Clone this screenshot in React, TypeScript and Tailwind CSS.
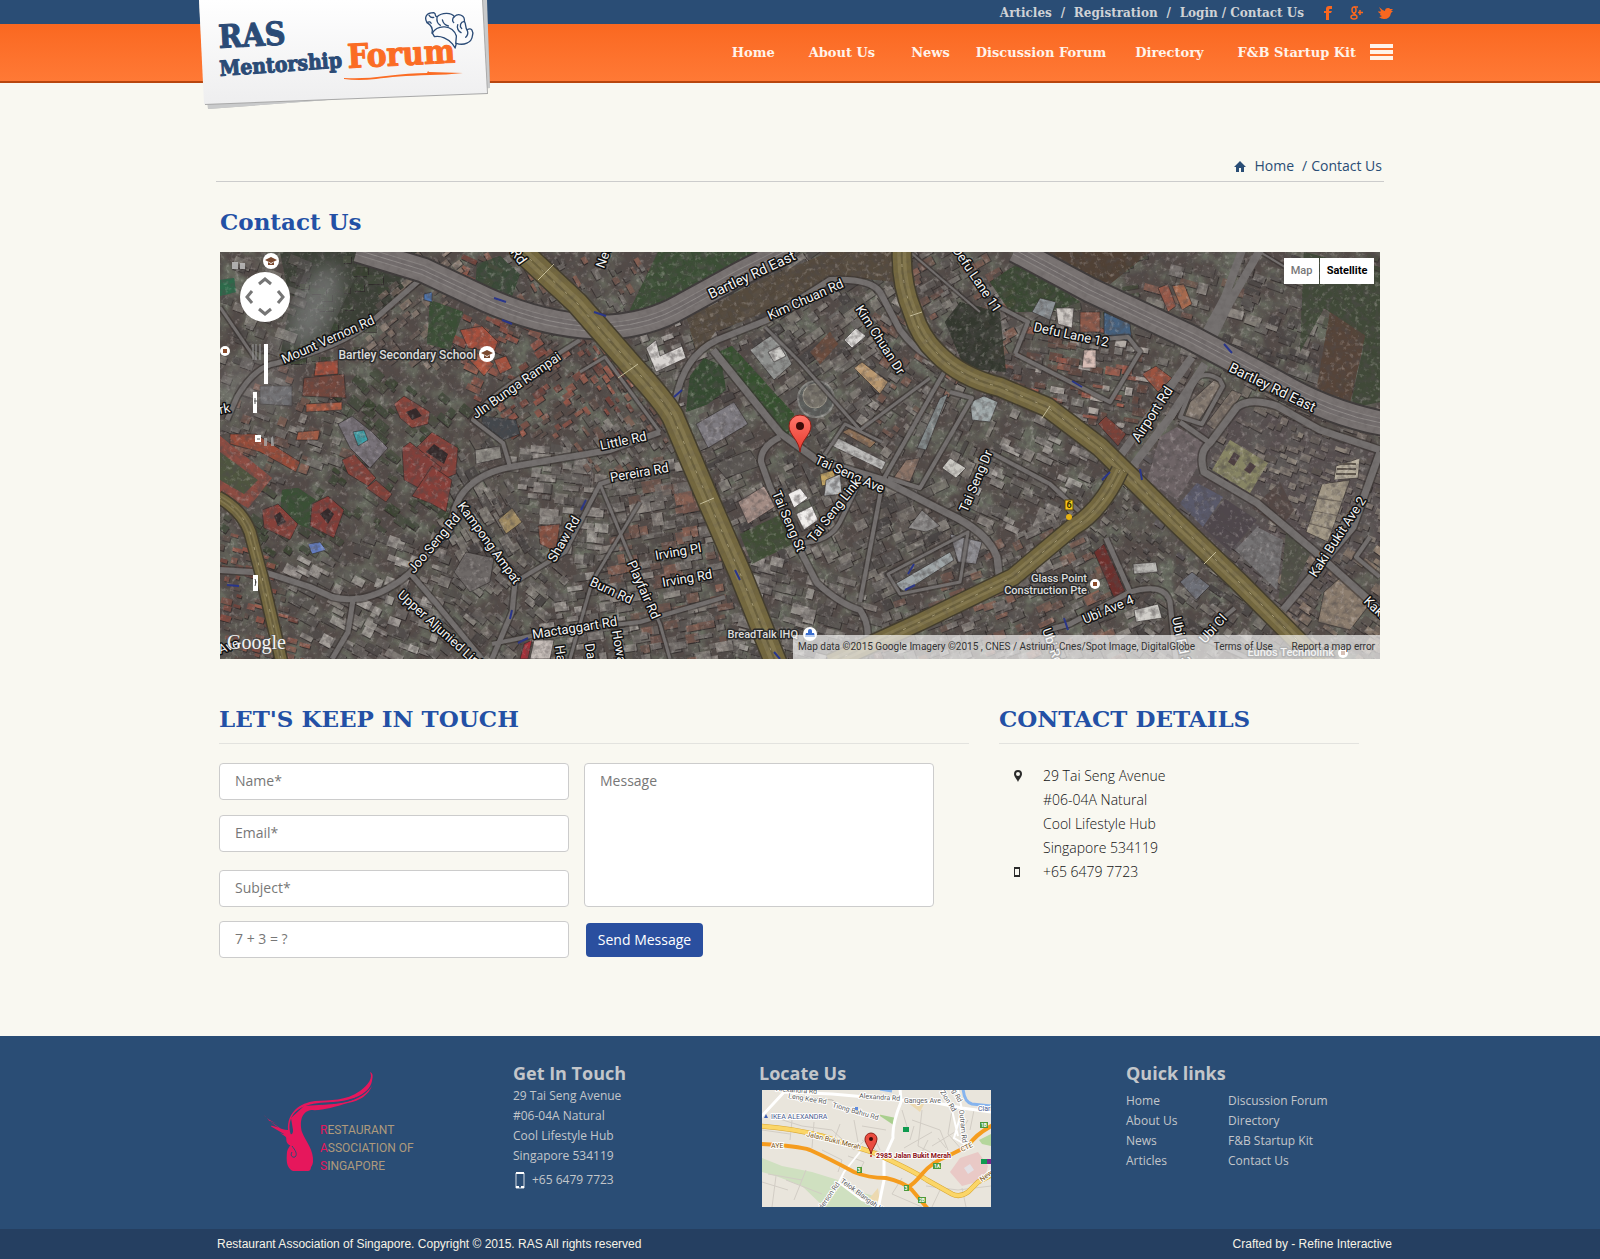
import React from "react";

const slab = "font-['DejaVu_Serif',serif] font-bold";

/* ---------- seeded random numbers for the aerial texture ---------- */
function makeRandom(seed: number) {
  let s = seed;
  return () => {
    s = (s * 1664525 + 1013904223) % 4294967296;
    return s / 4294967296;
  };
}

type Zone = { x: number; y: number; angle: number; size: number; density: number; colors: string[] };

const grey = ["#6f6b68", "#5a5654", "#858079", "#4b4746", "#8a857f", "#454141", "#635b57"];
const red = ["#8a4a3f", "#9a5547", "#74423a", "#635049", "#a3604f", "#5a4b46"];
const mixed = ["#78736f", "#8c6254", "#5d5855", "#9d9791", "#4f4946", "#74564c", "#7f7a76"];
const bright = ["#8a8581", "#b5b0ab", "#6b6663", "#5c5855", "#9b9590", "#504b49"];
const trees = ["#3c4635", "#414a3a", "#38432f", "#4a5040"];

const zones: Zone[] = [
  { x: 40, y: 30, angle: 20, size: 15, density: 0.35, colors: grey },
  { x: 110, y: 50, angle: 0, size: 12, density: 0.3, colors: trees },
  { x: 190, y: 80, angle: -38, size: 9, density: 0.8, colors: ["#8d7a6e", "#75645c", "#645752", "#9a897e"] },
  { x: 180, y: 150, angle: 40, size: 12, density: 0.4, colors: trees },
  { x: 265, y: 90, angle: 25, size: 12, density: 0.5, colors: red },
  { x: 330, y: 130, angle: -35, size: 9, density: 0.85, colors: red },
  { x: 350, y: 20, angle: 60, size: 9, density: 0.7, colors: mixed },
  { x: 390, y: 130, angle: 55, size: 9, density: 0.85, colors: red },
  { x: 400, y: 180, angle: 55, size: 9, density: 0.85, colors: mixed },
  { x: 60, y: 180, angle: 20, size: 12, density: 0.6, colors: mixed },
  { x: 110, y: 330, angle: 28, size: 14, density: 0.6, colors: bright },
  { x: 20, y: 360, angle: 15, size: 8, density: 0.9, colors: red },
  { x: 90, y: 260, angle: 35, size: 12, density: 0.45, colors: trees },
  { x: 180, y: 250, angle: 35, size: 12, density: 0.4, colors: trees },
  { x: 180, y: 300, angle: 20, size: 14, density: 0.6, colors: bright },
  { x: 265, y: 260, angle: 60, size: 14, density: 0.75, colors: grey },
  { x: 290, y: 340, angle: 40, size: 12, density: 0.75, colors: grey },
  { x: 330, y: 240, angle: 5, size: 14, density: 0.75, colors: bright },
  { x: 430, y: 240, angle: -10, size: 16, density: 0.75, colors: mixed },
  { x: 440, y: 330, angle: -10, size: 13, density: 0.8, colors: mixed },
  { x: 350, y: 380, angle: -8, size: 12, density: 0.8, colors: bright },
  { x: 440, y: 110, angle: -20, size: 10, density: 0.5, colors: bright },
  { x: 520, y: 200, angle: -25, size: 14, density: 0.45, colors: grey },
  { x: 610, y: 110, angle: -35, size: 14, density: 0.65, colors: grey },
  { x: 680, y: 120, angle: 35, size: 11, density: 0.75, colors: mixed },
  { x: 600, y: 250, angle: 65, size: 14, density: 0.5, colors: grey },
  { x: 660, y: 290, angle: -25, size: 16, density: 0.6, colors: grey },
  { x: 590, y: 360, angle: 15, size: 14, density: 0.65, colors: bright },
  { x: 740, y: 170, angle: -65, size: 13, density: 0.35, colors: grey },
  { x: 760, y: 30, angle: -30, size: 12, density: 0.8, colors: mixed },
  { x: 800, y: 200, angle: 25, size: 15, density: 0.6, colors: bright },
  { x: 850, y: 100, angle: 10, size: 11, density: 0.85, colors: ["#a65c4c", "#8b8783", "#bdb6b0", "#6b4940", "#5a5452"] },
  { x: 870, y: 20, angle: -10, size: 12, density: 0.4, colors: trees },
  { x: 960, y: 40, angle: 15, size: 14, density: 0.35, colors: mixed },
  { x: 1060, y: 80, angle: 20, size: 14, density: 0.5, colors: grey },
  { x: 1130, y: 70, angle: 20, size: 14, density: 0.2, colors: trees },
  { x: 1000, y: 140, angle: 28, size: 12, density: 0.35, colors: ["#6d645f", "#5d5654", "#7b716a"] },
  { x: 1100, y: 210, angle: 20, size: 9, density: 0.8, colors: ["#857b73", "#6e6660", "#958c81", "#5e5651"] },
  { x: 960, y: 260, angle: 35, size: 12, density: 0.12, colors: ["#575156", "#5f5a5e"] },
  { x: 850, y: 330, angle: -25, size: 13, density: 0.7, colors: mixed },
  { x: 910, y: 290, angle: 40, size: 7, density: 0.8, colors: grey },
  { x: 980, y: 350, angle: 35, size: 13, density: 0.6, colors: grey },
  { x: 1120, y: 370, angle: 35, size: 12, density: 0.7, colors: ["#8c7a6c", "#6c615a", "#9c8a79", "#5d5450"] },
  { x: 720, y: 390, angle: -20, size: 12, density: 0.7, colors: mixed },
];

const buildings = (() => {
  const rnd = makeRandom(20153);
  const out: { x: number; y: number; w: number; h: number; a: number; c: string; o: number }[] = [];
  for (let y = 3; y < 407; y += 10) {
    for (let x = 3; x < 1160; x += 11) {
      const px = x + rnd() * 6 - 3;
      const py = y + rnd() * 6 - 3;
      let zone = zones[0];
      let best = 1e9;
      for (const z of zones) {
        const d = (z.x - px) ** 2 + (z.y - py) ** 2;
        if (d < best) {
          best = d;
          zone = z;
        }
      }
      const k = rnd();
      const w = Math.round(zone.size * (0.5 + rnd() * 0.9));
      const h = Math.round(zone.size * (0.3 + rnd() * 0.5));
      const c = zone.colors[Math.floor(rnd() * zone.colors.length)];
      const o = 0.55 + rnd() * 0.35;
      if (k < zone.density) out.push({ x: Math.round(px), y: Math.round(py), w, h, a: zone.angle, c, o });
    }
  }
  return out;
})();

const fields: [string, string][] = [
  ["60,0 200,0 200,20 150,70 110,95 60,105 70,50", "#3b4036"],
  ["257,12 280,4 300,22 292,44 270,40 256,28", "#3a4a38"],
  ["210,48 243,60 230,98 207,92", "#3a4f35"],
  ["407,64 438,0 545,0 500,26 450,52", "#3b4e35"],
  ["467,66 545,26 610,0 678,0 678,30 615,24 545,60 495,80 478,106", "#554a3e"],
  ["498,100 512,94 574,162 568,184", "#36512f"],
  ["470,124 484,106 502,114 506,138 488,152 466,160", "#354a31"],
  ["520,282 562,262 572,292 532,312", "#404f36"],
  ["62,238 78,236 102,252 92,278 60,264", "#3a5035"],
  ["0,184 52,226 28,256 0,240", "#8c4c42"],
  ["0,200 38,228 24,242 0,228", "#47563f"],
  ["0,28 14,26 16,40 0,44", "#2d6a4a"],
  ["1110,60 1146,80 1130,150 1096,140", "#574439"],
  ["1084,0 1160,20 1160,150 1130,156 1146,84 1104,56 1080,100", "#404938"],
  ["830,0 930,0 880,40 840,20", "#504136"],
  ["770,30 800,10 860,50 830,60 790,60", "#394832"],
  ["725,70 740,50 780,60 786,120 745,116", "#33382f"],
  ["590,100 610,80 618,92 600,112", "#6a4b3e"],
  ["940,185 957,175 990,195 957,248 927,228", "#716769"],
  ["960,251 977,231 1003,245 983,275", "#5a5b6d"],
  ["983,275 1005,247 1037,268 1010,300", "#4e474b"],
  ["1010,188 1048,211 1030,241 992,218", "#8b8965"],
  ["1015,298 1037,275 1063,288 1057,338", "#787576"],
  ["1064,300 1066,280 1092,298 1072,340 1058,350", "#4f5145"],
  ["1032,256 1060,230 1074,258 1060,276", "#534743"],
];

const blocks: [string, string][] = [
  ["174,152 184,144 210,160 208,172 192,176 180,166", "#8b453c"],
  ["196,196 212,180 238,196 236,222 226,226", "#86423b"],
  ["182,196 190,190 222,216 206,240 184,228", "#833f3a"],
  ["212,214 232,228 226,260 212,252 192,244", "#883f39"],
  ["122,208 134,202 156,226 148,234 128,222", "#84423a"],
  ["146,236 156,228 172,242 166,250", "#83423a"],
  ["42,258 58,252 78,272 70,288 44,276", "#86413a"],
  ["92,252 108,244 124,258 114,286 90,274", "#833d38"],
  ["96,110 118,108 118,122 94,124", "#a24f3d"],
  ["84,126 124,122 126,146 82,144", "#74473d"],
  ["86,152 122,150 122,158 86,160", "#aa5b43"],
  ["78,180 100,178 98,188 76,188", "#a05c46"],
  ["10,182 36,182 80,210 76,220 40,200 10,192", "#974c3a"],
  ["240,78 262,74 278,90 274,100 248,96", "#a64f3d"],
  ["246,104 256,100 274,112 264,124", "#b0553f"],
  ["274,108 286,104 292,116 280,122", "#a4523f"],
  ["40,134 72,134 72,154 40,152", "#6b6c70"],
  ["118,172 132,164 152,180 168,196 150,216 130,196", "#79737a"],
  ["133,180 144,178 148,188 138,194", "#3ca3ac"],
  ["262,164 296,168 300,182 278,190 262,176", "#43474c"],
  ["255,198 280,194 282,206 256,212", "#8a8781"],
  ["278,268 292,256 302,270 286,282", "#a18c63"],
  ["318,274 340,272 336,300 320,292", "#865243"],
  ["234,320 246,300 274,306 270,330 250,340", "#6e6967"],
  ["476,172 514,150 528,172 488,196", "#7f7c82"],
  ["494,212 530,198 540,214 506,226", "#5c5854"],
  ["518,250 544,234 556,254 528,272", "#a38c84"],
  ["530,98 556,80 572,112 554,128", "#8e908e"],
  ["548,100 560,94 566,104 554,110", "#d0cfcb"],
  ["426,96 436,88 440,104 462,94 466,106 436,120", "#d8d4d1"],
  ["568,242 580,236 588,246 574,256", "#efecea"],
  ["576,262 592,254 598,268 584,278", "#f1eeec"],
  ["600,222 614,218 616,230 602,234", "#c4a664"],
  ["606,228 620,222 622,242 604,244", "#b9bcbe"],
  ["608,192 618,186 666,210 662,218", "#b9b8b6"],
  ["622,180 630,176 656,190 650,196", "#8e7158"],
  ["624,88 636,76 646,84 632,96", "#dcdad7"],
  ["634,116 642,110 668,130 660,142", "#b8976f"],
  ["720,146 728,142 706,198 697,196", "#838b8c"],
  ["672,228 686,208 700,206 690,230", "#8c7467"],
  ["750,150 764,144 778,150 770,170 752,168", "#a0a9aa"],
  ["722,216 730,206 746,216 736,226", "#c9c7c1"],
  ["675,332 730,300 734,308 684,340", "#9fa6a8"],
  ["730,282 762,290 756,312 738,310", "#8d8c91"],
  ["688,276 702,258 720,274 706,280", "#8b8988"],
  ["812,60 820,46 836,50 830,68", "#8c9296"],
  ["836,56 854,56 852,76 838,72", "#cfcac5"],
  ["860,60 880,60 880,80 860,80", "#8e5a4a"],
  ["884,60 910,72 912,90 884,82", "#45617f"],
  ["864,98 876,98 876,116 862,116", "#d6bcb4"],
  ["922,122 936,114 952,126 938,140", "#9c5340"],
  ["878,172 886,164 906,182 898,194", "#7d4138"],
  ["938,36 948,32 956,54 948,60", "#955848"],
  ["952,34 964,32 972,52 962,58", "#a66a4e"],
  ["874,300 884,292 908,346 896,350", "#6d2f2c"],
  ["913,312 936,310 938,320 914,322", "#b9b8b4"],
  ["914,358 938,352 942,366 916,370", "#cfcdc8"],
  ["970,150 994,128 1004,132 978,170 964,166", "#857a70"],
  ["986,172 1012,138 1022,142 998,180", "#7c7168"],
  ["1116,214 1140,206 1138,226 1114,228", "#b6ae9d"],
  ["1102,232 1130,228 1108,290 1086,280", "#a09684"],
  ["1104,340 1120,326 1150,352 1130,378 1098,370", "#8c7d6e"],
  ["960,330 972,320 990,334 976,348", "#6e7078"],
  ["88,292 100,290 106,298 92,302", "#6480c8"],
  ["204,42 212,40 212,50 204,48", "#4e76b0"],
  ["314,388 334,388 330,407 310,407", "#c6bdb8"],
  ["304,392 312,388 308,407 300,407", "#a4323a"],
];

const roads: [string, number][] = [
  ["M203 25L150 71Q120 95 57 111Q35 114 17 145L7 168", 6],
  ["M0 55L36 108", 4],
  ["M440 180L390 198L290 215Q255 222 240 245Q232 260 230 278L190 321Q150 355 112 345L90 335L47 321L0 318", 7],
  ["M360 88L300 126Q262 150 253 168L283 191L290 215", 5],
  ["M237 250L262 285L295 330L292 360L272 407", 6],
  ["M295 330L345 300L380 232L410 222", 5],
  ["M190 321L215 350L262 407", 6],
  ["M133 348L128 380L112 407", 6],
  ["M272 392L330 380L420 370L505 345", 5],
  ["M360 120L385 105L440 180", 4],
  ["M380 232L408 300L440 372L450 407", 4],
  ["M350 407L372 330L420 250", 4],
  ["M455 150Q460 125 470 111Q480 96 497 88L547 68L610 28Q650 26 660 40L680 78Q695 98 710 105", 7],
  ["M493 98L560 181L597 208L663 228L727 261Q768 280 777 305L780 330", 8],
  ["M560 185Q540 195 541 210L550 235L580 298L597 331Q620 352 640 358Q650 372 647 390", 7],
  ["M580 291Q610 290 620 270L637 235", 5],
  ["M605 202L625 172L662 190", 4],
  ["M640 178L710 126", 4],
  ["M727 115L663 228L640 350", 5],
  ["M730 140L752 146L700 236L668 226", 5],
  ["M640 178L580 110L545 75", 4],
  ["M668 322L748 280L740 330L680 342Z", 4],
  ["M795 102L808 70L770 50", 5],
  ["M795 102L890 150L920 100L908 85L870 88", 5],
  ["M690 0L760 60", 3],
  ["M770 200L830 232L860 260", 5],
  ["M960 165L975 128Q985 118 1000 128L1003 134L982 172Z", 5],
  ["M960 170L990 191", 6],
  ["M1160 198L1100 178L1057 154Q1030 145 1017 155L990 191Q978 200 984 220L1037 251L1093 298L1160 358", 8],
  ["M1160 200L1133 275L1063 358", 8],
  ["M886 286L910 340L850 372L820 380", 6],
  ["M910 340Q945 330 950 350L956 407", 6],
  ["M1015 356L980 385L1030 407", 5],
  ["M1150 285L1136 305L1160 325", 5],
  ["M1040 0L1090 30", 3],
];

const labels: [string, number, number, number, number?][] = [
  ["Mount Vernon Rd", 64, 112, -24],
  ["Jln Bunga Rampai", 256, 167, -35],
  ["Bartley Rd East", 491, 47, -25, 14],
  ["Kim Chuan Rd", 550, 68, -24],
  ["Kim Chuan Dr", 635, 57, 57],
  ["Defu Lane 11", 732, -2, 56],
  ["Defu Lane 12", 813, 79, 12],
  ["Bartley Rd East", 1008, 119, 26, 14],
  ["Airport Rd", 919, 191, -57, 14],
  ["Little Rd", 381, 198, -12],
  ["Pereira Rd", 391, 230, -10],
  ["Irving Pl", 436, 308, -10],
  ["Irving Rd", 443, 335, -10],
  ["Playfair Rd", 407, 311, 66],
  ["Burn Rd", 369, 333, 25],
  ["Shaw Rd", 335, 311, -60],
  ["Kampong Ampat", 237, 254, 54],
  ["Joo Seng Rd", 194, 322, -50],
  ["Upper Aljunied Link", 177, 344, 42],
  ["Mactaggart Rd", 313, 387, -9],
  ["Tai Seng Ave", 594, 211, 24],
  ["Tai Seng Link", 594, 291, -52],
  ["Tai Seng St", 552, 241, 67],
  ["Tai Seng Dr", 747, 261, -67],
  ["Ubi Ave 4", 865, 372, -23],
  ["Kaki Bukit Ave 2", 1096, 326, -57],
  ["Kaki Bukit", 1143, 350, 44],
  ["Ubi Cl", 985, 392, -48],
  ["Ubi Rd", 822, 378, 70],
  ["Ubi Rd 3", 952, 366, 78],
  ["Howard Rd", 392, 379, 80],
  ["Hang Rd", 335, 394, 82],
  ["Darul", 365, 392, 82],
  ["Rd", 290, 0, 55, 14],
  ["New", 384, 17, -70],
  ["rk", 0, 162, -10],
  ["Ave", 0, 402, -20],
];

function SatelliteMap() {
  const expressways = [
    "M137 -2L203 18L267 48Q330 76 390 75Q430 72 460 55L520 22L572 -4",
    "M795 -2L870 38L970 85L1057 131Q1110 162 1166 172",
  ];
  const yellow: [string, number][] = [
    ["M298 -4L357 51L413 115Q445 150 453 165L487 245L520 321L556 411", 21],
    ["M682 -4Q680 30 693 61Q700 85 717 101Q740 125 780 135L827 155L880 195L957 271L1020 331L1100 411", 18],
    ["M900 218Q880 260 853 275L793 325L700 370L610 411", 16],
    ["M-2 245Q22 258 30 280L42 325L62 411", 11],
  ];
  return (
    <svg
      className="block h-[407px] w-full"
      viewBox="0 0 1160 407"
      preserveAspectRatio="xMidYMid slice"
      role="img"
      aria-label="Satellite map around Tai Seng Avenue"
    >
      <defs>
        <filter id="patches" x="0" y="0" width="100%" height="100%">
          <feTurbulence type="fractalNoise" baseFrequency="0.045" numOctaves="3" seed="3" />
          <feColorMatrix values="0 0 0 0 0.17  0 0 0 0 0.2  0 0 0 0 0.15  3 0 0 0 -1.2" />
        </filter>
        <filter id="grain" x="0" y="0" width="100%" height="100%">
          <feTurbulence type="fractalNoise" baseFrequency="0.16" numOctaves="3" seed="7" />
          <feColorMatrix values="0 0 0 0 0.08  0 0 0 0 0.07  0 0 0 0 0.07  2.6 0 0 0 -1.1" />
        </filter>
        <filter id="specks" x="0" y="0" width="100%" height="100%">
          <feTurbulence type="fractalNoise" baseFrequency="0.2" numOctaves="3" seed="19" />
          <feColorMatrix values="0 0 0 0 0.86  0 0 0 0 0.8  0 0 0 0 0.78  0 3.4 0 0 -1.9" />
        </filter>
        <filter id="soft">
          <feGaussianBlur stdDeviation="10" />
        </filter>
        <linearGradient id="pin" x1="0" y1="0" x2="0" y2="1">
          <stop offset="0" stopColor="#ff776b" />
          <stop offset="1" stopColor="#e8382c" />
        </linearGradient>
      </defs>
      <rect width="1160" height="407" fill="#534a47" />
      <rect width="1160" height="407" filter="url(#patches)" opacity="0.7" />
      {fields.map(([p, c], i) => (
        <polygon key={i} points={p} fill={c} />
      ))}
      <polygon points="905,215 1010,150 1160,195 1160,290 1060,380 1000,320" fill="#5b5356" opacity="0.6" />
      <g>
        {buildings.map((b, i) => (
          <g key={i} transform={`translate(${b.x} ${b.y}) rotate(${b.a})`} opacity={b.o}>
            <rect x="1" y="1" width={b.w} height={b.h} fill="#2b2626" />
            <rect width={b.w} height={b.h} fill={b.c} />
          </g>
        ))}
      </g>
      {fields.slice(1).map(([p, c], i) => (
        <polygon key={i} points={p} fill={c} opacity="0.88" />
      ))}
      {blocks.map(([p, c], i) => (
        <polygon key={i} points={p} fill={c} stroke="#2a2424" strokeOpacity="0.6" />
      ))}
      <path d="M186 160L196 156L202 164L192 168ZM206 200L214 192L228 202L224 212ZM100 262L108 256L114 262L108 272ZM54 264L60 260L66 270L58 274Z" fill="#34292a" />
      <circle cx="596" cy="147" r="18" fill="#5d605d" stroke="#8a8a86" strokeWidth="2" />
      <circle cx="595" cy="144" r="12" fill="#77736a" stroke="#9b978b" />
      <path d="M1014 200L1020 204L1014 214L1008 210ZM1030 210L1036 214L1030 222L1024 218Z" fill="#4d3f41" />
      <path d="M1090 245L1124 250M1088 258L1120 264M1084 270L1114 278" stroke="#6d6459" />
      <path d="M1118 212L1136 212M1117 217L1136 217M1116 222L1136 222" stroke="#5d554b" strokeWidth="2" />
      <rect width="1160" height="407" filter="url(#grain)" opacity="0.42" />
      <rect width="1160" height="407" filter="url(#specks)" opacity="0.28" />
      <ellipse cx="95" cy="55" rx="20" ry="46" transform="rotate(25 95 55)" fill="#9a9a9c" opacity="0.55" filter="url(#soft)" />
      <ellipse cx="35" cy="135" rx="40" ry="26" fill="#8a8686" opacity="0.35" filter="url(#soft)" />
      <g fill="none" strokeLinejoin="round">
        {roads.map(([d, w], i) => (
          <path key={i} d={d} stroke="#35312f" strokeWidth={w + 2} opacity="0.6" />
        ))}
        {roads.map(([d, w], i) => (
          <path key={i} d={d} stroke="#74706f" strokeWidth={w - 1} />
        ))}
        <path d="M1040 -2L1010 50L990 91M1022 -2L1005 45L982 88M972 105L897 208M985 112L950 165L912 215" stroke="#757170" strokeWidth="8" />
        {expressways.map((d, i) => (
          <g key={i}>
            <path d={d} stroke="#3f3b3b" strokeWidth="27" />
            <path d={d} stroke="#797372" strokeWidth="23" />
            <path d={d} stroke="#8b8684" strokeWidth="10" />
            <path d={d} stroke="#736d6d" strokeWidth="8" />
            <path d={d} stroke="#928d8b" strokeWidth="1" />
          </g>
        ))}
        {yellow.map(([d, w], i) => (
          <g key={i}>
            <path d={d} stroke="#433d2d" strokeWidth={w + 3} />
            <path d={d} stroke="#74683f" strokeWidth={w} />
            <path d={d} stroke="#84784f" strokeWidth={w / 2} />
            <path d={d} stroke="#6b613d" strokeWidth="2" />
            <path d={d} stroke="#a89d78" strokeWidth="1" strokeDasharray="3 13" />
          </g>
        ))}
        <path d="M480 252L494 246M690 64L702 60M822 166L830 154M984 312L996 300M398 126L418 112M318 28L334 12" stroke="#c9c19d" strokeWidth="1" />
        <path
          d="M274 46L286 50M282 68L292 72M374 60L386 64M454 145L462 138M515 318L520 328M361 258L366 248M290 367L292 358M298 391L308 386M7 333L19 334M1004 92L1012 101M852 129L862 135M882 228L890 220M920 217L922 228M844 366L848 378M685 338L695 333M688 322L694 312M554 400L560 407"
          stroke="#28358c"
          strokeWidth="2"
        />
      </g>
      <rect width="1160" height="407" filter="url(#grain)" opacity="0.2" />
      <g
        fontFamily="Roboto, sans-serif"
        fill="#f4f4f4"
        stroke="#111111"
        strokeWidth="3"
        strokeLinejoin="round"
        paintOrder="stroke"
      >
        {labels.map(([t, x, y, a, s], i) => (
          <text key={i} transform={`translate(${x} ${y}) rotate(${a})`} fontSize={s ?? 13}>
            {t}
          </text>
        ))}
        <g fill="#dcdcdc" stroke="#2b2b2b" fontWeight="500">
          <text x="256" y="107" textAnchor="end" fontSize="12">Bartley Secondary School</text>
          <text x="867" y="330" textAnchor="end" fontSize="11">Glass Point</text>
          <text x="867" y="342" textAnchor="end" fontSize="11">Construction Pte</text>
          <text x="578" y="386" textAnchor="end" fontSize="11">BreadTalk IHQ</text>
          <text x="1114" y="404" textAnchor="end" fontSize="11">Eunos Technolink</text>
        </g>
      </g>
      {[[267, 102], [51, 9]].map(([x, y], i) => (
        <g key={i} transform={`translate(${x} ${y})`}>
          <circle r="8" fill="#ffffff" />
          <path d="M-6 -1L0 -4L6 -1L0 2ZM-3 1V4H3V1L0 3Z" fill="#7a4a30" />
        </g>
      ))}
      {[[875, 332], [5, 99], [1123, 401]].map(([x, y], i) => (
        <g key={i} transform={`translate(${x} ${y})`}>
          <circle r="5" fill="#ffffff" />
          <rect x="-2" y="-2" width="4" height="4" fill="#8b4c2c" />
        </g>
      ))}
      <circle cx="590" cy="382" r="7" fill="#ffffff" />
      <path d="M586 381L594 381L595 385H585ZM588 381V379A2 2 0 0 1 592 379V381" fill="#3a6ecf" />
      <g>
        <rect x="845" y="248" width="8" height="10" fill="#f8c81c" stroke="#5b4a10" />
        <text x="849" y="256" textAnchor="middle" fontFamily="Roboto, sans-serif" fontSize="9" fontWeight="700" fill="#3a3000">6</text>
        <circle cx="849" cy="265" r="3" fill="#e6b313" />
      </g>
      <g transform="translate(580 200)">
        <path d="M0 0C-1 -12 -11 -17 -11 -26A11 11 0 0 1 11 -26C11 -17 1 -12 0 0Z" fill="url(#pin)" stroke="#8f1f17" />
        <circle cy="-26" r="4" fill="#3d0b08" />
      </g>
      <g>
        <circle cx="45" cy="45" r="25" fill="#ffffff" />
        <path d="M39 32L45 27L51 32M39 57L45 62L51 57M32 39L27 45L32 51M58 39L63 45L58 51" fill="none" stroke="#757575" strokeWidth="3" />
        <rect x="44" y="92" width="4" height="40" fill="#ffffff" />
        <path d="M33 92V108M36 92V108M40 92V108" stroke="#9a9a9a" />
        <rect x="33" y="140" width="4" height="21" fill="#ffffff" />
        <path d="M35 146V152M34 149H37" stroke="#555555" />
        <rect x="35" y="183" width="6" height="7" fill="#ffffff" />
        <path d="M37 187H40" stroke="#555555" />
        <rect x="33" y="323" width="5" height="16" fill="#ffffff" />
        <path d="M35 327L36 330L35 334" stroke="#555555" />
        <path d="M44 186H47V194H44ZM51 186L53 184L54 194H51Z" fill="#a8a8a8" opacity="0.8" />
        <g fill="#c4c4c4" opacity="0.8"><rect x="12" y="10" width="6" height="7" /><rect x="20" y="11" width="5" height="6" /></g>
      </g>
      <text x="7" y="397" fontFamily="'Liberation Serif', serif" fontSize="20" fill="#f2f2f2" stroke="#555555" strokeWidth="1" paintOrder="stroke">Google</text>
    </svg>
  );
}

function StreetMap() {
  return (
    <svg className="block h-[117px] w-full" viewBox="0 0 229 117" preserveAspectRatio="xMidYMid slice" role="img" aria-label="Street map of Jalan Bukit Merah">
      <rect width="229" height="117" fill="#e9e5dc" />
      <path d="M0 68L20 76L50 82L76 90L84 98L112 106L116 117H62L40 96L14 86L0 82Z" fill="#cfe0c0" />
      <path d="M115 24L134 28L133 36Z" fill="#a9cf8e" />
      <path d="M217 50L229 44V56L220 54Z" fill="#b5d69c" />
      <path d="M145 12L162 14L158 22Z" fill="#ecd9b0" />
      <path d="M106 110L116 98L118 112Z" fill="#ecd9b0" />
      <path d="M188 82L198 68L216 62L226 76L222 90L200 96Z" fill="#e9c9c6" />
      <path d="M202 78L208 74L212 80L206 84Z" fill="#e3e0e4" />
      <g fill="none" stroke="#d2cdc5" strokeWidth="1">
        <path d="M8 26L40 36L70 40M30 30L28 50M52 32L50 58M14 86L10 117M24 90L60 104M44 80L32 110M70 40L92 60L110 44L118 60M92 30L96 52M78 34L72 50M100 36L124 40M100 50L122 66M150 30L178 40L186 60M160 20L156 56L176 66M142 58L170 42M170 56L196 40M140 88L130 104L160 117M164 96L196 100L229 96M178 100L170 117M200 98L204 117M190 20L186 44L200 60M0 40L28 44M96 84L102 72L86 66" />
        <path d="M166 50L160 62L172 72M176 48L184 58M152 36L148 50M206 30L198 44M212 20L208 40" />
        <path d="M0 92L26 100M6 84L40 90M60 60L80 70L76 82M140 20L146 40" />
      </g>
      <g fill="none" stroke="#ffffff">
        <path d="M-2 28L24 0M22 2L70 4L138 10L170 12L200 18L229 22" strokeWidth="3" />
        <path d="M138 -2L139 12Q130 34 131 48L122 68V90L116 119" strokeWidth="3" />
        <path d="M98 62L82 82L72 102L58 119M180 -2L190 20L196 46M196 0L200 20L192 48L206 56" strokeWidth="2" />
        <path d="M76 92L100 110L112 114" strokeWidth="2" />
      </g>
      <path d="M30 6L70 10L80 16L106 28" fill="none" stroke="#bdb9b2" strokeWidth="1" />
      <path d="M201 -2Q202 12 210 14L229 16M118 -1L130 1" fill="none" stroke="#86b4ee" strokeWidth="3" />
      <path d="M-2 36Q30 38 60 46L110 62Q150 80 165 90L190 104Q198 108 206 102L216 92L231 84" fill="none" stroke="#d8a632" strokeWidth="5" />
      <path d="M-2 36Q30 38 60 46L110 62Q150 80 165 90L190 104Q198 108 206 102L216 92L231 84" fill="none" stroke="#fbd668" strokeWidth="4" />
      <path d="M-2 54Q36 56 48 60Q66 68 92 82Q106 88 124 88Q142 92 150 100L166 119M146 97Q152 94 160 84Q170 72 186 66L206 56Q214 44 231 35" fill="none" stroke="#f59c1e" strokeWidth="4" />
      <g fontFamily="Roboto, sans-serif" fontSize="7" fill="#5f5f5f" stroke="#ffffff" strokeWidth="2" paintOrder="stroke" strokeLinejoin="round">
        <text x="97" y="8" transform="rotate(4 97 8)">Alexandra Rd</text>
        <text x="14" y="1" transform="rotate(4 14 1)">Alexandra Rd</text>
        <text x="26" y="8" transform="rotate(9 26 8)">Leng Kee Rd</text>
        <text x="70" y="17" transform="rotate(16 70 17)">Tiong Bahru Rd</text>
        <text x="142" y="13">Ganges Ave</text>
        <text x="178" y="2" transform="rotate(58 178 2)">Zion Rd</text>
        <text x="188" y="-3" transform="rotate(62 188 -3)">ng Rd</text>
        <text x="197" y="20" transform="rotate(84 197 20)">Outram Rd</text>
        <text x="78" y="92" transform="rotate(36 78 92)">Telok Blangah Way</text>
        <text x="60" y="120" transform="rotate(-55 60 120)">derson Rd</text>
        <text x="44" y="46" transform="rotate(14 44 46)" fontSize="7" fill="#7a5416">Jalan Bukit Merah</text>
        <text x="9" y="58" fill="#7a5416">AYE</text>
        <text x="200" y="62" transform="rotate(-25 200 62)" fill="#7a5416">CTE</text>
        <text x="220" y="92" transform="rotate(-38 220 92)" fill="#7a5416">New</text>
        <text x="9" y="29" fill="#4a5a8f">IKEA ALEXANDRA</text>
        <text x="216" y="21" fill="#4a5a8f">Clarke</text>
        <text x="114" y="68" fill="#8c1016" fontWeight="700">2985 Jalan Bukit Merah</text>
      </g>
      <path d="M2 28L4 24L6 28Z" fill="#3c5fb5" />
      <rect x="141" y="37" width="6" height="5" fill="#0f9a4f" />
      <rect x="219" y="69" width="6" height="5" fill="#0f9a4f" />
      <rect x="225" y="69" width="5" height="5" fill="#7a2b8c" />
      <rect x="93" y="17" width="3" height="3" fill="#5f8ce0" />
      <g fontFamily="Roboto, sans-serif" fontSize="5" fontWeight="700" fill="#ffffff" textAnchor="middle">
        {([[97, 80, "3"], [144, 98, "3"], [175, 76, "1A"], [222, 35, "1B"], [160, 110, "2B"]] as [number, number, string][]).map(([x, y, t], i) => (
          <g key={i}>
            <rect x={x - (t.length > 1 ? 4 : 2)} y={y - 3} width={t.length > 1 ? 8 : 5} height="6" fill="#4c9a3c" />
            <text x={x} y={y + 2}>{t}</text>
          </g>
        ))}
      </g>
      <path d="M109 64C108 58 103 54 103 49A6 6 0 0 1 115 49C115 54 110 58 109 64Z" fill="#ea4d40" stroke="#8f1f17" strokeWidth="1" />
      <circle cx="109" cy="49" r="2" fill="#3d0b08" />
      <circle cx="109" cy="66" r="1" fill="#c0201c" />
    </svg>
  );
}

function HeaderLogo() {
  return (
    <svg width="300" height="112" viewBox="0 0 300 112" className="block" role="img" aria-label="RAS Mentorship Forum">
      <defs>
        <linearGradient id="card" x1="0" y1="0" x2="0" y2="1">
          <stop offset="0" stopColor="#ffffff" />
          <stop offset="1" stopColor="#eeeeef" />
        </linearGradient>
      </defs>
      <path d="M10 0H296L301 88L284 89L18 109Z" fill="#8c8c8c" opacity="0.55" />
      <path d="M12 0H297L300 88L18 109Z" fill="#c9cacb" />
      <path d="M9 0H293L298 94L15 105Z" fill="#a9a9a9" />
      <path d="M9 0H292L297 93L14 104Z" fill="url(#card)" />
      <g fontFamily="'DejaVu Serif Condensed','DejaVu Serif',serif" fontWeight="700" strokeLinejoin="round">
        <text transform="translate(29 48) rotate(-3)" fontSize="32" fill="#2b4b76" stroke="#2b4b76" strokeWidth="1">RAS</text>
        <text transform="translate(30 76) rotate(-4)" fontSize="21" fill="#2b4b76" stroke="#2b4b76" strokeWidth="1">Mentorship</text>
        <text transform="translate(158 68) rotate(-3)" fontSize="33" fill="#fb6c24" stroke="#fb6c24" strokeWidth="1">Forum</text>
      </g>
      <path d="M154 78Q175 79 196 76Q220 73 237 73L238 71L239 72L273 73Q256 75 240 75Q205 76 186 79Q168 81 154 79Z" fill="#fb6c24" />
      <g transform="scale(0.333)" fill="none" stroke="#2b4b76" strokeWidth="4" strokeLinecap="round" strokeLinejoin="round">
        <path
          fill="#fbfbfc"
          d="M727 98C730 84 722 74 712 68C702 52 710 38 732 38C742 42 732 50 742 50C756 38 784 36 794 50C806 38 826 46 824 64C830 74 826 82 832 90C846 80 852 96 848 108C846 128 822 138 800 130L796 144L788 132C776 116 752 106 734 110Z"
        />
        <path d="M727 100C744 72 788 74 800 108L798 130M742 50C740 62 744 72 752 76M758 60C760 70 766 76 776 78M794 50C786 56 788 64 792 68M824 64C812 66 808 78 816 86M804 74C800 84 806 94 814 98M832 90C836 98 834 106 828 112M712 68C718 64 722 66 724 70M718 46C722 52 726 54 732 52" />
      </g>
    </svg>
  );
}

function AssociationLogo() {
  return (
    <svg width="160" height="104" viewBox="0 0 160 104" className="block" role="img" aria-label="Restaurant Association of Singapore">
      <g fill="#e6175c">
        <path d="M106 2Q110 3 108 11C105 26 84 31 69 32C46 33 30 36 26 52C23 66 33 74 41 83C49 94 48 101 44 101L29 101C20 97 22 82 27 76C19 72 25 68 20 65L20 64L8 57Q5 55 9 56L16 58L4 50L16 55C8 52 2 48 0 45C8 54 16 60 24 60C23 42 36 33 51 31C66 30 82 31 96 21C105 14 109 8 106 2Z" />
        <path d="M108 16C104 25 96 31 84 33C70 37 58 41 47 40C36 42 36 54 38 62C42 72 50 80 49 92C48 101 38 102 32 100C24 98 22 90 23 82C24 76 30 74 27 70L16 63Q30 68 29 60L27 48L40 36L70 34C90 32 101 26 108 16Z" />
      </g>
      <path d="M28 76C31 80 34 84 31 87C28 88 26 85 28 82M58 34C72 33 84 32 92 28" fill="none" stroke="#2a4d75" strokeWidth="1" />
      <g fontFamily="Roboto, sans-serif" fontSize="12" fill="#ae9a7c">
        <text x="56" y="64"><tspan fill="#e6175c">R</tspan>ESTAURANT</text>
        <text x="56" y="82"><tspan fill="#e6175c">A</tspan>SSOCIATION OF</text>
        <text x="56" y="100"><tspan fill="#e6175c">S</tspan>INGAPORE</text>
      </g>
    </svg>
  );
}

const field =
  "block h-[37px] w-full rounded border border-[#cccccc] bg-white px-[15px] pb-[2px] text-sm text-[#555555] placeholder:text-[#777777] placeholder:opacity-100";

function Field({ label, type = "text" }: { label: string; type?: string }) {
  return <input type={type} aria-label={label} placeholder={label} className={field} />;
}

function PhoneIcon({ className }: { className: string }) {
  return (
    <svg className={className} viewBox="0 0 10 17" fill="none" stroke="currentColor" aria-hidden="true">
      <path d="M1 1H9V16H1Z" strokeWidth="1" opacity="0.8" />
      <path d="M1 1H9M1 15H4M6 15H9" strokeWidth="2" />
    </svg>
  );
}

const address = ["29 Tai Seng Avenue", "#06-04A Natural", "Cool Lifestyle Hub", "Singapore 534119"];

export default function App() {
  return (
    <div className="flex min-h-screen flex-col bg-[#f9f8f1] font-['Open_Sans',sans-serif]">
      <header className="relative">
        <div className="h-6 bg-[#2a4d75]">
          <nav aria-label="Account" className={`${slab} mx-auto flex h-full max-w-[1186px] items-center justify-end pt-[2px] text-xs text-[#cfd2d6]`}>
            <a href="#articles">Articles</a>
            <span className="w-[22px] text-center">/</span>
            <a href="#registration">Registration</a>
            <span className="w-[22px] text-center">/</span>
            <a href="#login">Login</a>
            <span className="px-1">/</span>
            <a href="#contact">Contact Us</a>
            <span className="ml-5 flex items-center gap-[14px] text-[#f9671f]">
              <a href="#facebook" aria-label="Facebook">
                <svg width="8" height="14" viewBox="0 0 8 14" className="block"><path fill="currentColor" d="M8 0V3H6Q5 3 5 4V5H8L7 7H5V14H2V7H0V5H2V3Q2 0 5 0Z" /></svg>
              </a>
              <a href="#google-plus" aria-label="Google Plus" className="ml-1">
                <svg width="14" height="14" viewBox="0 0 14 14" className="block" fill="none" stroke="currentColor">
                  <ellipse cx="4" cy="4" rx="2" ry="3" strokeWidth="1.500" />
                  <ellipse cx="4" cy="11" rx="3" ry="2" strokeWidth="1.500" />
                  <path d="M4 1H8M5 7Q3 7 4 8L6 9M10 4V9M8 6.500H13" strokeWidth="1.500" />
                </svg>
              </a>
              <a href="#twitter" aria-label="Twitter">
                <svg width="15" height="13" viewBox="0 0 15 13" className="block"><path fill="currentColor" d="M0 4Q2 5 3 4L1 0Q4 3 7 4Q7 1 10 1Q12 1 12 2L15 2L13 4L15 4L13 6Q12 12 6 12Q3 12 1 10Q3 10 4 9Q2 9 2 7L3 7Q0 6 0 4Z" /></svg>
              </a>
            </span>
          </nav>
        </div>
        <div className="h-[59px] border-b-2 border-[#b8460f] bg-gradient-to-b from-[#fa6820] to-[#ff7935]">
          <nav aria-label="Main" className={`${slab} mx-auto flex h-full max-w-[1186px] items-center justify-end text-[13px] text-[#fff3ea]`}>
            <a href="#home" className="mr-[34px]">Home</a>
            <a href="#about" className="mr-[36px]">About Us</a>
            <a href="#news" className="mr-[26px]">News</a>
            <a href="#discussion" className="mr-[29px]">Discussion Forum</a>
            <a href="#directory" className="mr-[34px]">Directory</a>
            <a href="#kit">F&amp;B Startup Kit</a>
            <button type="button" aria-label="Open menu" className="mb-[2px] ml-[14px] flex w-[23px] flex-col gap-[2px]">
              <span className="h-1 bg-[#fff3ea]" />
              <span className="h-1 bg-[#fff3ea]" />
              <span className="h-1 bg-[#fff3ea]" />
            </button>
          </nav>
        </div>
        <div className="pointer-events-none absolute inset-x-0 top-0">
          <div className="mx-auto max-w-[1220px]">
            <a href="#home" className="pointer-events-auto inline-block"><HeaderLogo /></a>
          </div>
        </div>
      </header>

      <main className="mx-auto w-full max-w-[1168px] flex-1 pt-[73px]">
        <nav aria-label="Breadcrumb" className="flex h-[26px] items-start justify-end border-b border-[#cccccc] pr-[2px] text-sm leading-5 font-medium text-[#2a4d75]">
          <svg width="12" height="11" viewBox="0 0 12 11" className="mt-[5px] mr-2 block"><path fill="currentColor" d="M6 0L12 6H10V11H7V7H5V11H2V6H0Z" /></svg>
          <a href="#home">Home</a>
          <span className="mr-1 ml-2">/</span>
          <span>Contact Us</span>
        </nav>

        <section className="mr-1 ml-1">
          <h1 className={`${slab} mt-[22px] text-[23px] leading-9 text-[#2350a5]`}>Contact Us</h1>
          <div className="relative mt-3">
            <SatelliteMap />
            <div className="absolute top-[6px] right-[6px] flex gap-[1px] font-['Roboto',sans-serif] text-[11px] font-medium">
              <button type="button" className="h-[26px] w-[35px] bg-white text-[#777777]">Map</button>
              <button type="button" className="h-[26px] w-[54px] bg-white font-bold text-black">Satellite</button>
            </div>
            <div className="absolute right-0 bottom-0 flex h-6 w-[587px] items-center justify-between bg-white/65 px-[5px] pb-[2px] font-['Roboto',sans-serif] text-[10px] whitespace-nowrap text-[#333333]">
              <span>Map data ©2015 Google Imagery ©2015 , CNES / Astrium, Cnes/Spot Image, DigitalGlobe</span>
              <a href="#terms">Terms of Use</a>
              <a href="#report">Report a map error</a>
            </div>
          </div>
        </section>

        <div className="mt-[42px] ml-[3px] flex gap-[30px]">
          <section className="max-w-[750px] flex-[750]">
            <h2 className={`${slab} border-b border-[#e3e3df] pb-[6px] text-[23px] leading-9 text-[#2350a5]`}>LET'S KEEP IN TOUCH</h2>
            <form className="mt-[19px] mr-[35px] grid grid-cols-2 gap-x-[15px]">
              <div>
                <Field label="Name*" />
                <div className="mt-[15px]"><Field label="Email*" type="email" /></div>
                <div className="mt-[18px]"><Field label="Subject*" /></div>
                <div className="mt-[14px]"><Field label="7 + 3 = ?" /></div>
              </div>
              <div className="flex flex-col items-start">
                <textarea
                  aria-label="Message"
                  placeholder="Message"
                  className="block h-36 w-full resize-none rounded border border-[#cccccc] bg-white px-[15px] py-[7px] text-sm text-[#555555] placeholder:text-[#777777] placeholder:opacity-100"
                />
                <button type="button" className="mt-4 ml-[2px] h-[34px] w-[117px] rounded bg-[#2a4f9f] text-sm text-white">Send Message</button>
              </div>
            </form>
          </section>
          <section className="max-w-[360px] flex-[360]">
            <h2 className={`${slab} border-b border-[#e3e3df] pb-[6px] text-[23px] leading-9 whitespace-nowrap text-[#2350a5]`}>CONTACT DETAILS</h2>
            <div className="mt-5 ml-[15px] text-sm leading-6 font-light text-[#111111]">
              <div className="flex">
                <svg width="8" height="12" viewBox="0 0 8 12" className="mt-[6px] mr-[21px] block"><path fillRule="evenodd" fill="#2b2b2b" d="M4 12C3 9 0 7 0 4A4 4 0 0 1 8 4C8 7 5 9 4 12ZM4 2A2 2 0 0 0 4 6A2 2 0 0 0 4 2Z" /></svg>
                <address className="not-italic">
                  {address.map((line) => (
                    <div key={line}>{line}</div>
                  ))}
                </address>
              </div>
              <div className="flex">
                <svg width="8" height="10" viewBox="0 0 8 10" className="mt-[7px] mr-[21px] block"><path fillRule="evenodd" fill="#2b2b2b" d="M0 0H6V10H0ZM1 2V8H5V2Z" /></svg>
                <span>+65 6479 7723</span>
              </div>
            </div>
          </section>
        </div>
      </main>

      <footer className="mt-[78px] bg-[#2a4d75] text-[#c3c6ca]">
        <div className="mx-auto flex h-[193px] max-w-[1168px] items-start pt-6">
          <div className="w-[297px] pt-[10px] pl-12"><AssociationLogo /></div>
          <section className="w-[246px] text-xs leading-5">
            <h3 className="text-lg leading-[26px] font-bold">Get In Touch</h3>
            <address className="not-italic">
              {address.map((line) => (
                <div key={line}>{line}</div>
              ))}
            </address>
            <div className="mt-1 flex items-center">
              <PhoneIcon className="mr-[7px] ml-[2px] h-[17px] w-[10px] text-white" />
              +65 6479 7723
            </div>
          </section>
          <section className="w-[367px]">
            <h3 className="text-lg leading-[26px] font-bold">Locate Us</h3>
            <div className="mt-1 ml-[3px] w-[229px]"><StreetMap /></div>
          </section>
          <section>
            <h3 className="text-lg leading-[26px] font-bold">Quick links</h3>
            <div className="mt-[5px] flex text-xs leading-5">
              <ul className="w-[102px]">
                {["Home", "About Us", "News", "Articles"].map((t) => (
                  <li key={t}><a href="#link">{t}</a></li>
                ))}
              </ul>
              <ul>
                {["Discussion Forum", "Directory", "F&B Startup Kit", "Contact Us"].map((t) => (
                  <li key={t}><a href="#link">{t}</a></li>
                ))}
              </ul>
            </div>
          </section>
        </div>
        <div className="bg-[#253f61] font-['Liberation_Sans',sans-serif] text-xs text-[#f7f3e6]">
          <div className="mx-auto flex h-[30px] max-w-[1184px] items-center justify-between pl-[9px]">
            <span>Restaurant Association of Singapore. Copyright © 2015. RAS All rights reserved</span>
            <span>Crafted by - Refine Interactive</span>
          </div>
        </div>
      </footer>
    </div>
  );
}
